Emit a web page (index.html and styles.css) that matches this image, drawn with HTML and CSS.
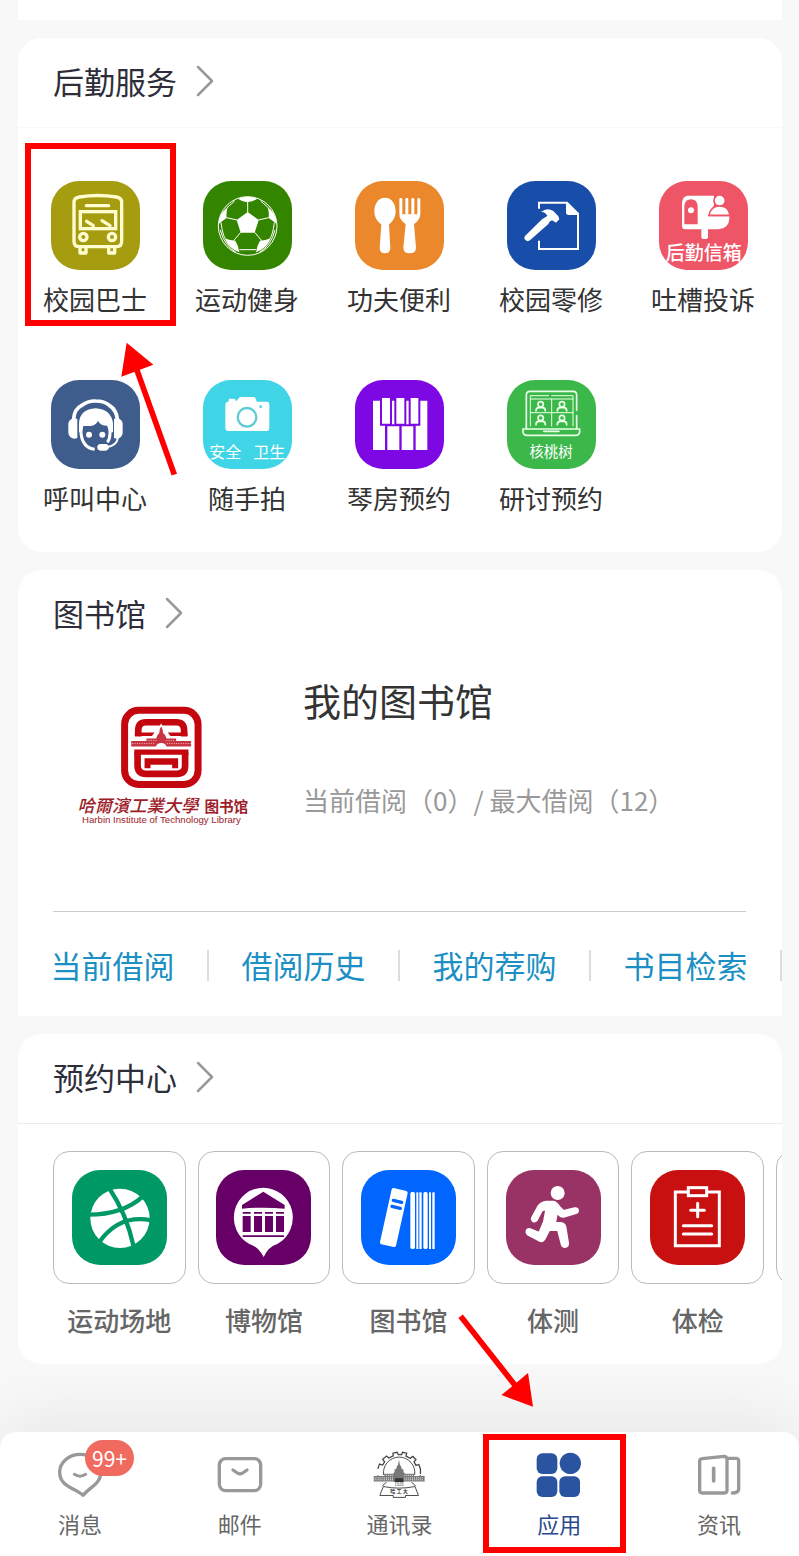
FILE: index.html
```html
<!DOCTYPE html>
<html lang="zh-CN">
<head>
<meta charset="utf-8">
<meta name="viewport" content="width=device-width, initial-scale=1">
<title>应用</title>
<link rel="stylesheet" href="styles.css">
</head>
<body>
<main class="page">
  <section class="card card-stub"></section>

  <section class="card services">
    <h2 class="card-head ruled faint"><a href="#">后勤服务
      <svg class="chevron" viewBox="0 0 20 32"><path d="M3 2 17 16 3 30"/></svg></a></h2>
    <ul class="app-grid">
      <li class="app marked"><a href="#">
        <svg class="app-icon bus" viewBox="153 543 267 267">
          <g fill="none" stroke="#fffdd0" stroke-width="10" stroke-linejoin="round" stroke-linecap="round">
            <path d="M222 607Q222 594 238 591Q293 582 350 591Q365 594 365 607V724Q365 740 350 740H237Q222 740 222 724Z"/>
            <path d="M259 617H326"/><rect x="241" y="635" width="106" height="51" stroke-linejoin="miter"/>
            <path d="M260 664 280 677M306 662 330 677"/>
            <circle cx="250" cy="711" r="11"/><circle cx="336" cy="711" r="11"/>
            <path d="M240 742V759H258V742M326 742V759H344V742"/>
          </g></svg>
        <span>校园巴士</span></a></li>
      <li class="app"><a href="#">
        <svg class="app-icon sport" viewBox="609 543 267 267">
          <g fill="none" stroke="#fff" stroke-width="3">
            <circle cx="743" cy="678" r="88"/>
            <path d="M743 637V604M775 660 806 653M764 697 785 722M722 697 701 722M711 660 680 653M663 668Q668 705 676 716M823 668Q818 705 810 716M718 749H768M704 603 680 624M782 603 806 624M661 690Q672 736 708 757M825 690Q814 736 778 757"/>
          </g>
          <g fill="#fff"><path d="M743 636 776 660 764 698H722L710 660Z"/>
            <path d="M715 596Q743 584 771 596Q762 605 743 606Q724 605 715 596ZM803 622Q828 638 830 672Q818 662 806 654Q808 638 803 622ZM683 622Q658 638 656 672Q668 662 680 654Q678 638 683 622ZM812 715Q802 744 768 757Q770 738 780 722Q796 722 812 715ZM674 715Q684 744 718 757Q716 738 706 722Q690 722 674 715Z"/></g></svg>
        <span>运动健身</span></a></li>
      <li class="app"><a href="#">
        <svg class="app-icon food" viewBox="74 63 267 267">
          <g fill="#fff"><path d="M164 113C184 113 196 132 196 153C196 172 187 185 176 193L180 263Q180 280 164 280Q148 280 148 263L153 193C141 185 132 172 132 153C132 132 144 113 164 113Z"/>
            <path d="M207 118Q207 114 211 114Q216 114 216 118V163H225V118Q225 114 229 114Q234 114 234 118V163H243V118Q243 114 248 114Q252 114 252 118V163H261V118Q261 114 265 114Q270 114 270 118V160Q270 181 251 192L257 263Q257 280 238 280Q219 280 219 263L226 192Q207 181 207 160Z"/></g></svg>
        <span>功夫便利</span></a></li>
      <li class="app"><a href="#">
        <svg class="app-icon repair" viewBox="530 63 267 267">
          <path fill="none" stroke="#fff" stroke-width="6" d="M626 146V128H710L743 161V267H626V242"/>
          <path fill="#fff" d="M707 126V157Q707 165 715 165H744Z"/>
          <path fill="#fff" d="M632 158Q650 143 669 155L684 171L687 180L677 190L668 184Q662 183 657 188L654 194L599 243Q592 248 586 243Q579 237 584 230L635 180L651 170Q645 157 632 158Z" transform="translate(0 -2)"/></svg>
        <span>校园零修</span></a></li>
      <li class="app"><a href="#">
        <svg class="app-icon complain" viewBox="295 63 267 267">
          <path fill="#fff" d="M380 107H460V135L443 169H506V177Q504 206 474 208H442V232Q442 237 436 237H428Q422 237 422 232V208H374Q364 208 364 198V128Q366 109 380 107Z"/>
          <path fill="#ee5566" d="M371 193V137Q374 118 391 118Q408 118 411 137V193Z"/>
          <circle cx="391" cy="151" r="9" fill="#fff"/>
          <circle cx="477" cy="122" r="17" fill="#fff" stroke="#ee5566" stroke-width="5"/>
          <path d="M445 166Q450 138 477 138Q502 138 507 162V166Z" fill="#fff" stroke="#ee5566" stroke-width="5"/>
          <text x="429" y="300" font-size="57" font-weight="500" text-anchor="middle">后勤信箱</text></svg>
        <span>吐槽投诉</span></a></li>
      <li class="app"><a href="#">
        <svg class="app-icon call" viewBox="93 149 267 267">
          <g fill="none" stroke="#fff" stroke-linecap="round"><path stroke-width="11" d="M161 265Q164 236 184 226Q204 211 227 212Q254 212 269 226Q288 238 292 265"/>
            <path stroke-width="6" d="M294 322Q290 346 262 350"/>
            <path stroke-width="9" stroke-linecap="butt" d="M183 290V308Q187 352 224 357M270 290V308Q270 326 262 336"/></g>
          <g fill="#fff"><path d="M177 305V278Q180 236 227 234Q272 236 279 278V305L270 308Q262 292 262 286Q240 286 234 271Q229 284 211 287H190L185 308Z"/>
            <path d="M164 263Q146 266 145 280V308Q147 324 164 325L172 323V266ZM290 263Q307 266 308 280V308Q306 324 290 325L282 323V266Z"/>
            <circle cx="207" cy="313" r="9"/><circle cx="247" cy="313" r="9"/><rect x="232" y="341" width="34" height="20" rx="10"/></g></svg>
        <span>呼叫中心</span></a></li>
      <li class="app"><a href="#">
        <svg class="app-icon camera" viewBox="549 149 267 267">
          <path fill="#fff" d="M626 214V209Q626 205 630 205H642Q647 205 647 211H651Q657 200 662 200H701Q707 200 710 214H740Q748 214 748 223V293Q748 302 740 302H625Q616 302 616 293V223Q616 214 626 214Z"/>
          <circle cx="681" cy="261" r="28" fill="none" stroke="#5bcbd4" stroke-width="7"/><circle cx="722" cy="229" r="4" fill="#40d5e6"/>
          <text x="568" y="383" font-size="48">安全</text><text x="700" y="383" font-size="48">卫生</text></svg>
        <span>随手拍</span></a></li>
      <li class="app"><a href="#">
        <svg class="app-icon piano" viewBox="74 59 267 267">
          <path fill="#fff" d="M128 121H149V196H164V269H128ZM171 198H207V269H171ZM214 198H249V269H214ZM291 121H270V196H256V269H291ZM155 113H179V190H155ZM198 113H222V190H198ZM241 113H264V190H241ZM185 121H192V192H185ZM228 121H235V192H228Z"/></svg>
        <span>琴房预约</span></a></li>
      <li class="app"><a href="#">
        <svg class="app-icon seminar" viewBox="530 59 267 267">
          <g fill="none" stroke="#e8ffe8" stroke-width="5" stroke-linejoin="round" stroke-linecap="round">
            <path d="M739 150V104Q739 93 728 93H599Q588 93 588 104V204M739 166V204"/>
            <path stroke-width="3" d="M600 197V106H655M664 106H728V197M600 116H728M664 116V197M600 157H728"/>
            <path d="M578 206H748V216Q746 225 736 225H590Q580 225 578 216ZM640 213H686"/>
            <g stroke-width="5"><circle cx="631" cy="132" r="8"/><path d="M617 152Q617 142 625 142H637Q645 142 645 152"/>
            <circle cx="695" cy="132" r="8"/><path d="M681 152Q681 142 689 142H701Q709 142 709 152"/>
            <circle cx="631" cy="173" r="8"/><path d="M617 193Q617 183 625 183H637Q645 183 645 193"/>
            <circle cx="695" cy="173" r="8"/><path d="M681 193Q681 183 689 183H701Q709 183 709 193"/></g></g>
          <text x="662" y="290" font-size="43" text-anchor="middle">核桃树</text></svg>
        <span>研讨预约</span></a></li>
    </ul>
    <svg class="arrow arrow-up" viewBox="300 30 180 411" aria-hidden="true"><path d="M350 118 463 434" stroke="#f00" stroke-width="17"/><path fill="#f00" d="M320 38 400 104 304 140Z"/></svg>
  </section>

  <section class="card library">
    <h2 class="card-head"><a href="#">图书馆
      <svg class="chevron" viewBox="0 0 20 32"><path d="M3 2 17 16 3 30"/></svg></a></h2>
    <div class="library-body">
      <svg class="library-logo" viewBox="80 105 530 370">
        <g fill="none" stroke="#c4060f">
          <rect x="228" y="121" width="221" height="223" rx="42" stroke-width="21"/>
          <path stroke-width="20" d="M269 200V180Q270 157 292 157H384Q406 157 407 180V200M267 248V288Q268 312 292 312H386Q410 312 410 288V248"/>
          <path stroke-width="16" d="M257 247H420"/></g>
        <path fill="#c4060f" d="M259 198V188H318L310 198ZM417 198V188H358L366 198ZM288 265H389V295H371V285H306V295H288Z"/>
        <path fill="#fff" d="M309 206 320 198 329 177 338 160 347 177 356 198 368 206Z"/>
        <path fill="#c93442" d="M248 213H294V206H323L327 195L332 190L334 178L338 169L342 178L344 190L350 195L354 206H383V213H428V230H354Q352 219 338 219Q325 219 322 230H248Z"/>
        <path stroke="#fff" stroke-width="2" stroke-dasharray="3 4" d="M251 221H321M355 221H427M300 212H325M353 212H381"/>
        <g fill="#9d2029"><text class="script" x="86" y="428" font-size="52">哈爾濱工業大學</text>
        <text x="468" y="427" font-size="44" font-weight="700">图书馆</text>
        <text class="latin" x="100" y="459" font-size="29">Harbin Institute of Technology Library</text></g>
      </svg>
      <div class="library-info">
        <h3>我的图书馆</h3>
        <p>当前借阅（0）/ 最大借阅（12）</p>
      </div>
    </div>
    <ul class="library-links">
      <li><a href="#">当前借阅</a></li>
      <li><a href="#">借阅历史</a></li>
      <li><a href="#">我的荐购</a></li>
      <li><a href="#">书目检索</a></li>
    </ul>
  </section>

  <section class="card booking">
    <h2 class="card-head ruled"><a href="#">预约中心
      <svg class="chevron" viewBox="0 0 20 32"><path d="M3 2 17 16 3 30"/></svg></a></h2>
    <ul class="tiles">
      <li><a href="#"><span class="tile"><svg class="tile-icon court" viewBox="158 120 285 285">
        <circle cx="302" cy="265" r="89" fill="#fff"/>
        <path fill="none" stroke="#009966" stroke-width="13" d="M268 172Q322 252 343 350M208 254Q310 254 370 200M240 336Q300 252 396 271"/></svg></span>
        <span class="tile-name">运动场地</span></a></li>
      <li><a href="#"><span class="tile"><svg class="tile-icon museum" viewBox="591 120 285 285">
        <path fill="#fff" d="M733 173A89 90 0 0 1 775 342Q748 350 734 381Q718 350 691 342A89 90 0 0 1 733 173Z"/>
        <path fill="#660066" d="M733 185 797 225V236Q733 230 669 236V225ZM671 246H695V251H671ZM705 246H729V251H705ZM738 246H762V251H738ZM771 246H795V251H771ZM671 258H695V306H671ZM705 258H729V306H705ZM738 258H762V306H738ZM771 258H795V306H771ZM671 316H795V321H671Z"/></svg></span>
        <span class="tile-name">博物馆</span></a></li>
      <li><a href="#"><span class="tile"><svg class="tile-icon books" viewBox="64 120 285 285">
        <g fill="#fff"><path d="M162 174 200 183Q205 185 204 190L169 347Q167 352 162 351L125 343Q120 341 121 336L156 178Q158 173 162 174Z"/>
        <rect x="212" y="186" width="14" height="171" rx="5"/><rect x="230" y="187" width="6" height="170"/><rect x="239" y="187" width="7" height="170"/><rect x="251" y="186" width="13" height="171" rx="5"/><rect x="268" y="187" width="6" height="170"/><rect x="278" y="187" width="7" height="170"/></g>
        <path stroke="#0066ff" stroke-width="10" stroke-linecap="round" d="M161 211 186 217M157 229 182 235"/></svg></span>
        <span class="tile-name">图书馆</span></a></li>
      <li><a href="#"><span class="tile"><svg class="tile-icon run" viewBox="498 120 285 285">
        <circle cx="653" cy="189" r="21" fill="#fff"/>
        <path fill="#fff" stroke="#fff" stroke-width="6" stroke-linejoin="round" d="M618 215H640Q650 217 657 229L670 243L704 235Q713 234 714 242Q714 247 708 249L671 260Q663 261 658 255L651 247L645 279H662Q674 281 676 290L684 339Q685 351 675 351Q667 351 665 342L654 300L628 299L613 328Q609 335 601 333L564 314Q557 308 561 300Q566 295 574 299L598 309L612 275L619 238L606 241L590 271Q585 276 579 273Q573 268 577 262L595 229Q602 218 618 215Z"/></svg></span>
        <span class="tile-name">体测</span></a></li>
      <li><a href="#"><span class="tile"><svg class="tile-icon checkup" viewBox="91 450 285 285">
        <g fill="none" stroke="#fff" stroke-width="9" stroke-linecap="round"><path d="M202 516H167V677H299V516H265"/>
        <rect x="206" y="503" width="55" height="24"/><path d="M234 550V590M213 571H254M191 617H276M191 642H276"/></g></svg></span>
        <span class="tile-name">体检</span></a></li>
      <li><a href="#" aria-label="更多"><span class="tile"></span></a></li>
    </ul>
    <svg class="arrow arrow-down" viewBox="355 550 235 290" aria-hidden="true"><path d="M363 559 528 768" stroke="#f00" stroke-width="17"/><path fill="#f00" d="M581 831 566 730 486 796Z"/></svg>
  </section>
</main>

<nav class="tabbar">
  <a href="#"><svg class="tab-icon" viewBox="168 180 144 144"><path fill="none" stroke="#999" stroke-width="10" stroke-linejoin="round" d="M240 190C272 190 302 213 302 245C302 278 272 286 249 313C230 291 179 290 179 243C179 213 208 190 240 190Z"/><path fill="none" stroke="#999" stroke-width="9" stroke-linecap="round" d="M223 250Q240 261 257 250"/></svg><span class="badge">99+</span><span>消息</span></a>
  <a href="#"><svg class="tab-icon" viewBox="648 180 144 144"><g fill="none" stroke="#999" stroke-width="10" stroke-linecap="round" stroke-linejoin="round"><rect x="658" y="203" width="124" height="96" rx="19"/><path d="M699 237 712 246Q720 251 728 246L741 237"/></g></svg><span>邮件</span></a>
  <a href="#"><svg class="tab-icon crest" viewBox="1118 178 162 150">
    <g fill="none" stroke="#444"><path stroke-width="4" d="M1138 270 1133 254M1133 234 1138 219 1148 222 1154 212 1148 204 1160 194 1167 200 1181 193 1180 185 1193 182 1197 189H1207L1210 182 1223 185 1221 194 1234 201 1242 195 1252 205 1246 212 1252 223 1261 220 1266 234 1266 250M1260 270 1266 254"/>
    <path stroke-width="3" d="M1151 253A49 49 0 1 1 1248 253M1160 276Q1152 280 1147 288M1238 276Q1246 280 1251 288"/></g>
    <path fill="#777" d="M1120 256H1153V249H1181L1185 244V235H1190L1193 225L1196 222L1199 205L1202 222L1205 225L1208 235H1213V244L1218 249H1246V256H1279V273H1120Z"/>
    <path stroke="#fff" stroke-width="3" stroke-dasharray="3 3" d="M1123 262H1183M1216 262H1276M1123 268H1183M1216 268H1276M1158 254H1182M1216 254H1243"/>
    <path fill="#333" d="M1186 263H1212V275H1186ZM1183 273H1215V275H1183Z"/>
    <path fill="#fff" stroke="#444" stroke-width="3" d="M1150 289Q1199 299 1249 289L1260 317H1219V323H1181V317H1139Z"/>
    <g fill="#333" text-anchor="middle"><text x="1199" y="288" font-size="13">1920</text><text x="1199" y="310" font-size="16" font-weight="700">哈 工 大</text></g></svg><span>通讯录</span></a>
  <a href="#" class="current marked" aria-current="page"><svg class="tab-icon" viewBox="258 180 144 144"><g fill="#2a53a0"><rect x="263" y="187" width="62" height="62" rx="17"/><circle cx="364" cy="217" r="32"/><rect x="263" y="256" width="62" height="62" rx="17"/><rect x="331" y="256" width="62" height="62" rx="17"/></g></svg><span>应用</span></a>
  <a href="#"><svg class="tab-icon" viewBox="734 180 144 144"><g fill="none" stroke="#999" stroke-width="10" stroke-linecap="round" stroke-linejoin="round"><path d="M756 203 821 196Q829 196 830 204V298Q830 306 822 306H756Q748 306 748 298V211Q748 204 756 203ZM832 202H858Q865 203 865 210V296Q863 306 846 306"/><path stroke-width="11" d="M790 232V270"/></g></svg><span>资讯</span></a>
</nav>
</body>
</html>
```
FILE: styles.css
```css
* { box-sizing: border-box; }
body {
  margin: 0;
  background: #f8f8f8;
  color: #333;
  font-family: "Noto Sans CJK SC", "Noto Sans", sans-serif;
}
h2, h3, p, ul { margin: 0; padding: 0; font-weight: 400; }
ul { list-style: none; }
a { color: inherit; text-decoration: none; }
svg { display: block; }

.page {
  display: flex;
  flex-direction: column;
  gap: 18px;
  padding: 0 17px 68px 18px;
}
.card { position: relative; background: #fff; border-radius: 24px; }
.card-stub { height: 20px; border-radius: 0; }

.card-head { padding: 18px 35px 22px; font-size: 31px; line-height: 49px; color: #2e2e3a; }
.card-head a { display: inline-flex; align-items: center; gap: 18px; }
.ruled { border-bottom: 1px solid #ebebeb; }
.faint { border-color: #f8f8f8; }
.chevron { width: 20px; height: 32px; fill: none; stroke: #999; stroke-width: 2.5; stroke-linecap: round; stroke-linejoin: round; }

.app-grid {
  display: grid;
  grid-template-columns: repeat(5, 1fr);
  row-gap: 62px;
  padding: 53px 3px 35px 1px;
}
.app { position: relative; }
.app a { display: flex; flex-direction: column; align-items: center; gap: 10px; font-size: 26px; line-height: 38px; white-space: nowrap; }
.app-icon { width: 89px; height: 89px; border-radius: 28px; }
.app-icon text { fill: #fff; }
.bus { background: #a69c10; }
.sport { background: #338500; }
.food { background: #ea882b; }
.repair { background: #184ea9; }
.complain { background: #ee5566; }
.call { background: #3f5d8c; }
.camera { background: #40d5e6; }
.piano { background: #7d08e3; }
.seminar { background: #3cb84b; }

.marked::after { content: ""; position: absolute; border: 6px solid #f00; }
.app.marked::after { inset: -38px -5px -8px 6px; }
.arrow { position: absolute; }
.arrow-up { left: 102px; top: 302px; width: 60px; height: 137px; }
.arrow-down { left: 440px; top: 279px; width: 78px; height: 97px; z-index: 2; }

.library { border-radius: 24px 24px 0 0; }
.library-body {
  display: grid;
  grid-template-columns: 220px 1fr;
  gap: 30px;
  margin: 0 36px 0 35px;
  padding: 13px 0 83px;
  border-bottom: 1px solid #ccc;
}
.library-logo { width: 177px; height: 123px; margin: 33px auto 0; }
.library-logo .script { font-style: italic; font-weight: 500; }
.library-logo .latin { font-family: "Liberation Sans", sans-serif; }
.library-info { display: grid; gap: 52px; align-content: start; white-space: nowrap; }
.library-info h3 { font-size: 38px; line-height: 56px; }
.library-info p { font-size: 26px; line-height: 40px; color: #999; }
.library-links { display: grid; grid-template-columns: repeat(4, 1fr); padding: 38px 0 35px; }
.library-links li { display: flex; justify-content: center; height: 31px; border-right: 2px solid #ddd; }
.library-links a { font-size: 31px; line-height: 29px; color: #1c8fc4; white-space: nowrap; }

.tiles {
  display: grid;
  grid-auto-flow: column;
  grid-auto-columns: calc((100% - 48px) / 5);
  gap: 12px;
  padding: 27px 18px 25px 35px;
  overflow: hidden;
}
.tiles a { display: flex; flex-direction: column; gap: 17px; text-align: center; }
.tile { display: grid; place-items: center; height: 133px; border: 1px solid #bbb; border-radius: 16px; }
.tile-icon { width: 95px; height: 95px; border-radius: 28px; }
.tile-name { font-size: 26px; line-height: 38px; font-weight: 500; color: #666; white-space: nowrap; }
.court { background: #009966; }
.museum { background: #660066; }
.books { background: #0066ff; }
.run { background: #993366; }
.checkup { background: #c81010; }

.tabbar {
  position: relative;
  display: grid;
  grid-template-columns: repeat(5, 1fr);
  background: #fff;
  border-radius: 16px 16px 0 0;
  box-shadow: 0 -20px 60px rgba(0, 0, 0, .06);
}
.tabbar a { position: relative; display: flex; flex-direction: column; align-items: center; gap: 9px; padding: 19px 0 18px; font-size: 22px; line-height: 30px; color: #666; }
.tab-icon { width: 48px; height: 48px; }
.tabbar .crest { width: 54px; }
.tabbar .current { color: #2a4a8c; }
.current.marked::after { inset: 2px 13px 3px 4px; }
.badge { position: absolute; left: 85px; top: 8px; padding: 0 7px; border-radius: 18px; background: #f06a60; color: #fff; font-size: 21px; line-height: 36px; }
```
